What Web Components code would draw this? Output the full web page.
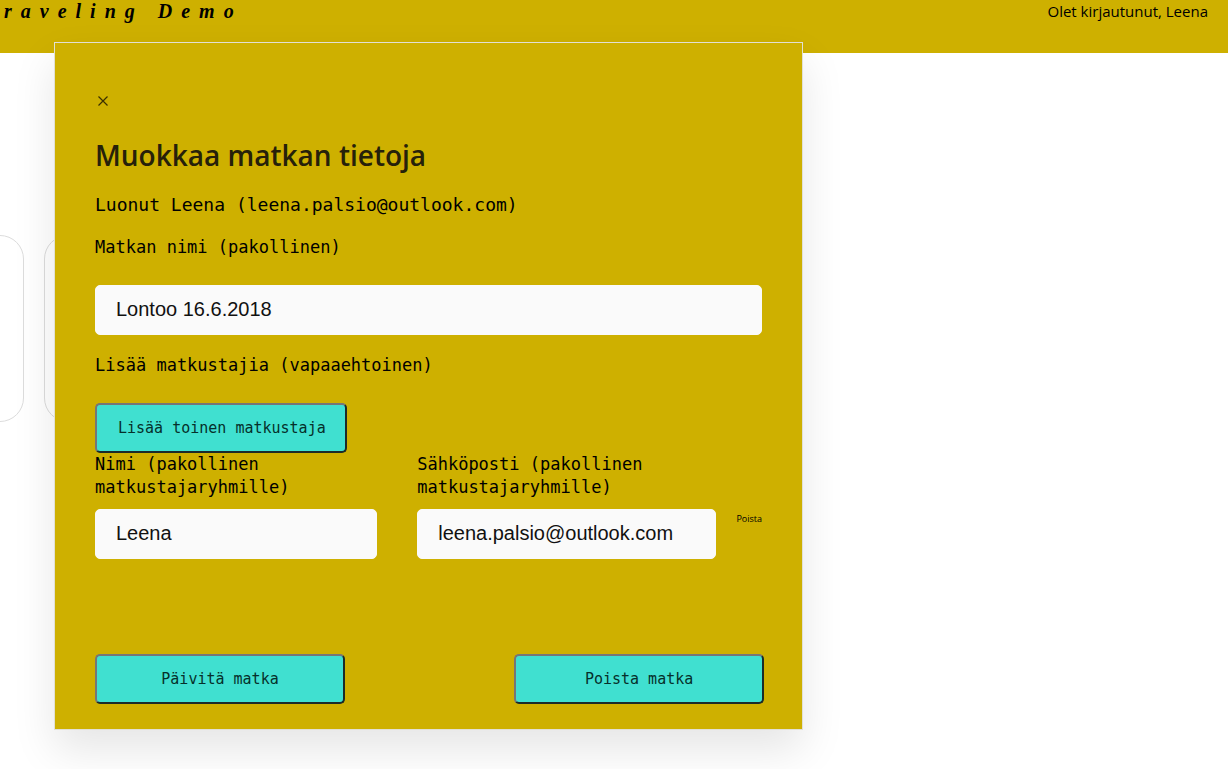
<!DOCTYPE html>
<html lang="fi">
<head>
<meta charset="utf-8">
<title>Traveling Demo</title>
<style>
body { margin: 0; background: #fff; color: #000; font-family: "Open Sans", sans-serif; --gold: #ceb000; --mono: "DejaVu Sans Mono", monospace; overflow-x: hidden; }
</style>
</head>
<body>
<travel-app></travel-app>
<script>
function define(name, html) {
  const template = document.createElement('template');
  template.innerHTML = html;
  customElements.define(name, class extends HTMLElement {
    constructor() {
      super();
      this.attachShadow({ mode: 'open' }).append(template.content.cloneNode(true));
    }
    connectedCallback() {
      const input = this.shadowRoot.querySelector('input');
      if (input) {
        input.value = this.getAttribute('value') || '';
        input.type = this.getAttribute('type') || 'text';
      }
    }
  });
}

define('site-header', `
<style>
:host { display: flex; justify-content: space-between; height: 53px; padding: 0 20px 0 4px; background: var(--gold); box-sizing: border-box; }
.brand { font: italic bold 20px/22px "Liberation Serif", cursive; letter-spacing: 9px; white-space: nowrap; }
.user { font-size: 15px; line-height: 22px; }
</style>
<div class="brand"><slot name="brand"></slot></div>
<div class="user"><slot></slot></div>`);

define('trip-card', `
<style>
:host { display: block; flex: none; width: 240px; height: 187px; border: 1px solid #dcdcdc; border-radius: 24px; box-sizing: border-box; background: #fff; }
</style><slot></slot>`);

define('action-button', `
<style>
:host { display: block; }
button { width: 100%; height: 50px; padding: 0 21px; border: 2px solid; border-color: #767676 #1c2b29 #1c2b29 #767676; border-radius: 5px; background: turquoise; color: #06302b; font: 15px/24px var(--mono); white-space: nowrap; }
</style>
<button type="button"><slot></slot></button>`);

define('text-field', `
<style>
:host { display: block; min-width: 0; }
label { display: block; font: 17px/23px var(--mono); margin-bottom: var(--label-gap, 10px); }
input { display: block; width: 100%; height: 50px; padding: 0 20px 2px; border: 1px solid #fafafa; border-radius: 5px; box-sizing: border-box; background: #fafafa; color: #111; font: 20px/24px "Liberation Sans", sans-serif; }
</style>
<label for="field"><slot></slot></label>
<input id="field">`);

define('traveler-row', `
<style>
:host { display: grid; grid-template-columns: 282fr 359fr auto; align-items: end; }
.mail { margin: 0 20px 0 40px; }
button { height: 50px; padding: 0 0 30px; border: 0; background: none; color: #000; font: 9px/20px "Open Sans", sans-serif; }
</style>
<text-field class="name" value="Leena">Nimi (pakollinen matkustajaryhmille)</text-field>
<text-field class="mail" type="email" value="leena.palsio@outlook.com">Sähköposti (pakollinen matkustajaryhmille)</text-field>
<button type="button">Poista</button>`);

define('trip-dialog', `
<style>
:host { display: block; width: 61vw; padding: 46px 40px 25px; border: 1px solid #e2e0d4; box-sizing: border-box; background: var(--gold); box-shadow: 0 20px 40px rgba(0, 0, 0, .1); }
.close { display: block; width: 16px; height: 24px; padding: 0; border: 0; background: none; }
.close svg { display: block; margin: auto; }
h2 { margin: 18px 0 12px; font-size: 28px; line-height: 48px; font-weight: 600; color: #26210a; }
.author { margin: 0 0 17px; font: 18px/28px var(--mono); }
.trip { --label-gap: 26px; }
.label { margin: 18px 0 26px; font: 17px/24px var(--mono); }
.add { width: 252px; }
.footer { display: flex; justify-content: space-between; margin: 95px -2px 0 0; }
.footer action-button { width: 250px; }
</style>
<button class="close" type="button" aria-label="Sulje"><svg width="12" height="12" viewBox="0 0 12 12"><path d="M1.5 1.5l9 9M10.5 1.5l-9 9" stroke="#3b3000" stroke-width="1.2" fill="none"/></svg></button>
<h2>Muokkaa matkan tietoja</h2>
<p class="author">Luonut Leena (leena.palsio@outlook.com)</p>
<text-field class="trip" value="Lontoo 16.6.2018">Matkan nimi (pakollinen)</text-field>
<p class="label">Lisää matkustajia (vapaaehtoinen)</p>
<action-button class="add">Lisää toinen matkustaja</action-button>
<traveler-row></traveler-row>
<div class="footer"><action-button>Päivitä matka</action-button><action-button>Poista matka</action-button></div>`);

define('travel-app', `
<style>
:host { display: block; position: relative; min-height: 100vh; }
.cards { display: flex; gap: 20px; margin: 182px 0 0 -216px; }
trip-dialog { position: absolute; top: 42px; left: 54px; }
</style>
<site-header><span slot="brand">raveling Demo</span>Olet kirjautunut, Leena</site-header>
<div class="cards"><trip-card></trip-card><trip-card></trip-card></div>
<trip-dialog role="dialog" aria-label="Muokkaa matkan tietoja"></trip-dialog>`);
</script>
</body>
</html>
